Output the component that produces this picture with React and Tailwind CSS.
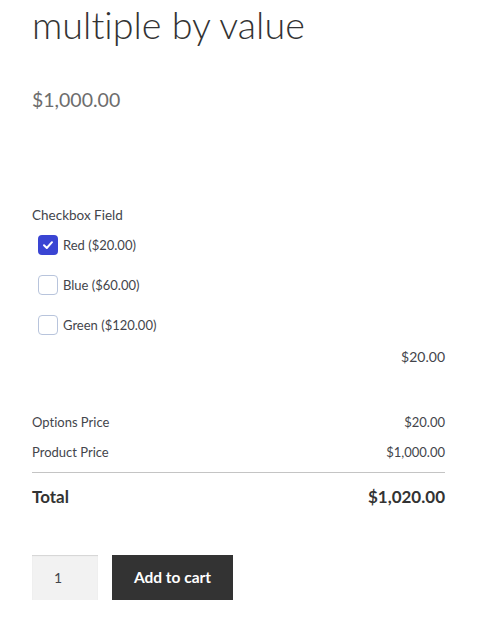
function CheckRow({ label, checked }) {
  return (
    <div className="flex h-[20px] items-center pl-[6px]">
      {checked ? (
        <span className="flex h-[20px] w-[20px] items-center justify-center rounded-[4px] bg-[#3a45d3]">
          <svg width="12" height="12" viewBox="0 0 12 12" fill="none">
            <path d="M2 6.3 L4.8 9 L10 3.2" stroke="white" strokeWidth="2" strokeLinecap="round" strokeLinejoin="round" />
          </svg>
        </span>
      ) : (
        <span className="h-[20px] w-[20px] rounded-[4px] border border-[#b8c4dc] bg-white" />
      )}
      <span className="ml-[5px] text-[13px] leading-[20px] text-[#43454b]">{label}</span>
    </div>
  );
}

export default function App() {
  return (
    <div className="min-h-[623px] bg-white pl-[32px] pr-[36px] [font-family:Lato,'Open_Sans',sans-serif] [font-variant-ligatures:none]">
      <h1 className="mt-[1px] text-[37.7px] font-light leading-[48px] text-[#333333]">multiple by value</h1>
      <div className="mt-[37px] text-[19.5px] leading-[28px] text-[#6d6d6d]">$1,000.00</div>

      <div className="mt-[91px] text-[13.5px] leading-[20px] text-[#43454b]">Checkbox Field</div>
      <div className="mt-[10px] flex flex-col gap-[20px]">
        <CheckRow label="Red ($20.00)" checked />
        <CheckRow label="Blue ($60.00)" />
        <CheckRow label="Green ($120.00)" />
      </div>

      <div className="mt-[12px] text-right text-[14px] leading-[20px] text-[#43454b]">$20.00</div>

      <div className="mt-[45px] flex justify-between text-[13px] leading-[20px] text-[#43454b]">
        <span>Options Price</span>
        <span>$20.00</span>
      </div>
      <div className="mt-[10px] flex justify-between text-[13px] leading-[20px] text-[#43454b]">
        <span>Product Price</span>
        <span>$1,000.00</span>
      </div>
      <div className="mt-[10px] h-px bg-[#c4c4c4]" />
      <div className="mt-[12px] flex justify-between text-[17px] font-bold leading-[24px] text-[#333333]">
        <span>Total</span>
        <span>$1,020.00</span>
      </div>

      <div className="mt-[46px] flex items-center gap-[14px]">
        <div className="flex h-[45px] w-[66px] items-center bg-[#f2f2f2] pl-[22px] text-[14px] text-[#43454b] shadow-[inset_0_1px_1px_rgba(0,0,0,0.125)]">
          1
        </div>
        <button className="flex h-[45px] w-[121px] items-center justify-center bg-[#333333] text-[15.5px] font-bold text-white">
          Add to cart
        </button>
      </div>
    </div>
  );
}
